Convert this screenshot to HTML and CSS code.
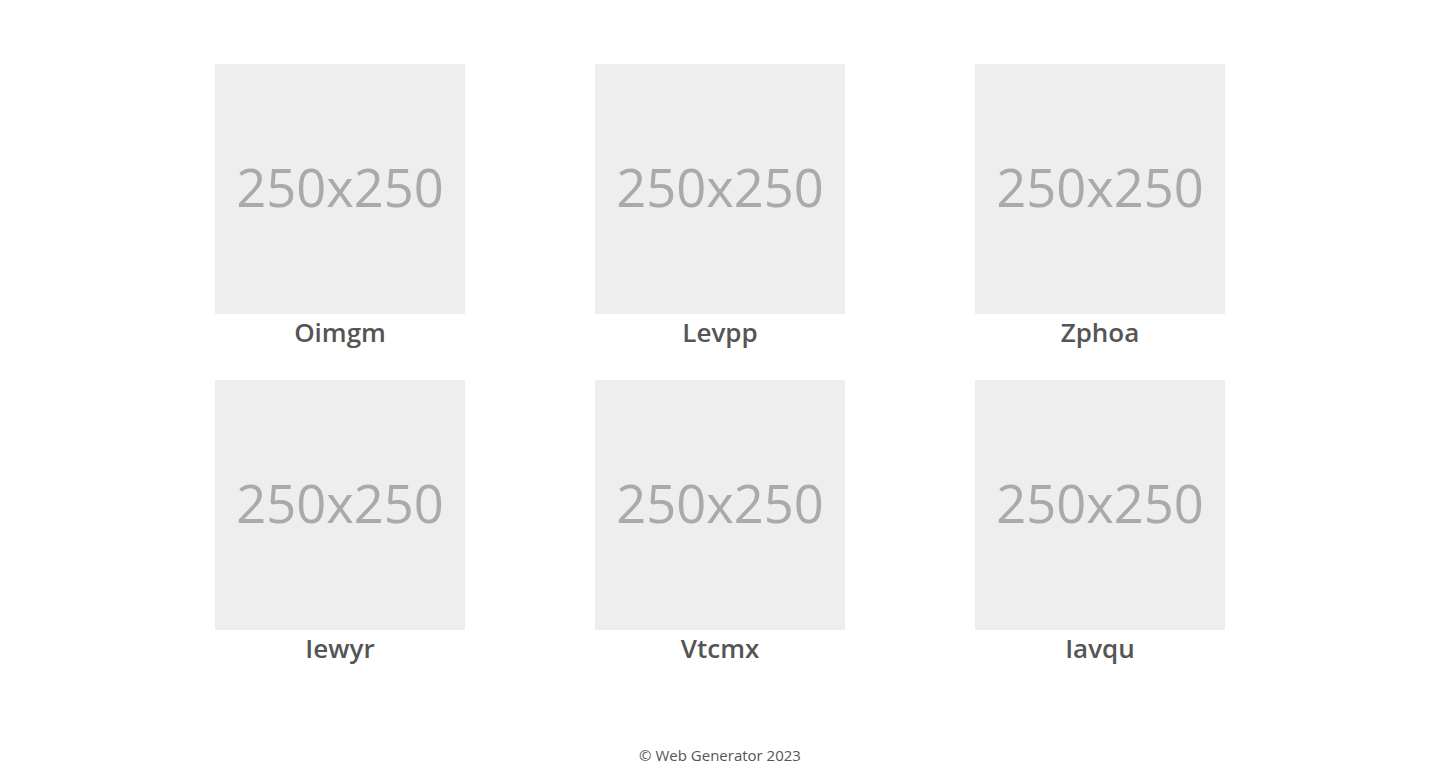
FILE: index.html
```html
<!DOCTYPE html>
<html>
<head>
<meta charset="utf-8">
<link rel="stylesheet" href="styles.css">
</head>
<body>
<main class="gallery">
  <div class="card"><div class="ph">250x250</div><div class="name">Oimgm</div></div>
  <div class="card"><div class="ph">250x250</div><div class="name">Levpp</div></div>
  <div class="card"><div class="ph">250x250</div><div class="name">Zphoa</div></div>
  <div class="card"><div class="ph">250x250</div><div class="name">Iewyr</div></div>
  <div class="card"><div class="ph">250x250</div><div class="name">Vtcmx</div></div>
  <div class="card"><div class="ph">250x250</div><div class="name">Iavqu</div></div>
</main>
<footer class="footer">© Web Generator 2023</footer>
</body>
</html>
```
FILE: styles.css
```css
html, body {
  margin: 0;
  padding: 0;
  background: #fff;
  font-family: "Open Sans", "Noto Sans", sans-serif;
  color: #555;
}
.gallery {
  display: grid;
  grid-template-columns: repeat(3, 250px);
  column-gap: 130px;
  row-gap: 30px;
  justify-content: center;
  padding-top: 64px;
}
.card {
  display: flex;
  flex-direction: column;
  align-items: center;
}
.ph {
  width: 250px;
  height: 250px;
  box-sizing: border-box;
  padding-bottom: 6px;
  background: #eee;
  color: #aaa;
  font-size: 52.5px;
  display: flex;
  align-items: center;
  justify-content: center;
}
.name {
  font-size: 26px;
  font-weight: 600;
  line-height: 36px;
  color: #555;
}
.footer {
  text-align: center;
  font-size: 15px;
  line-height: 20px;
  margin-top: 79px;
  color: #555;
}
```
